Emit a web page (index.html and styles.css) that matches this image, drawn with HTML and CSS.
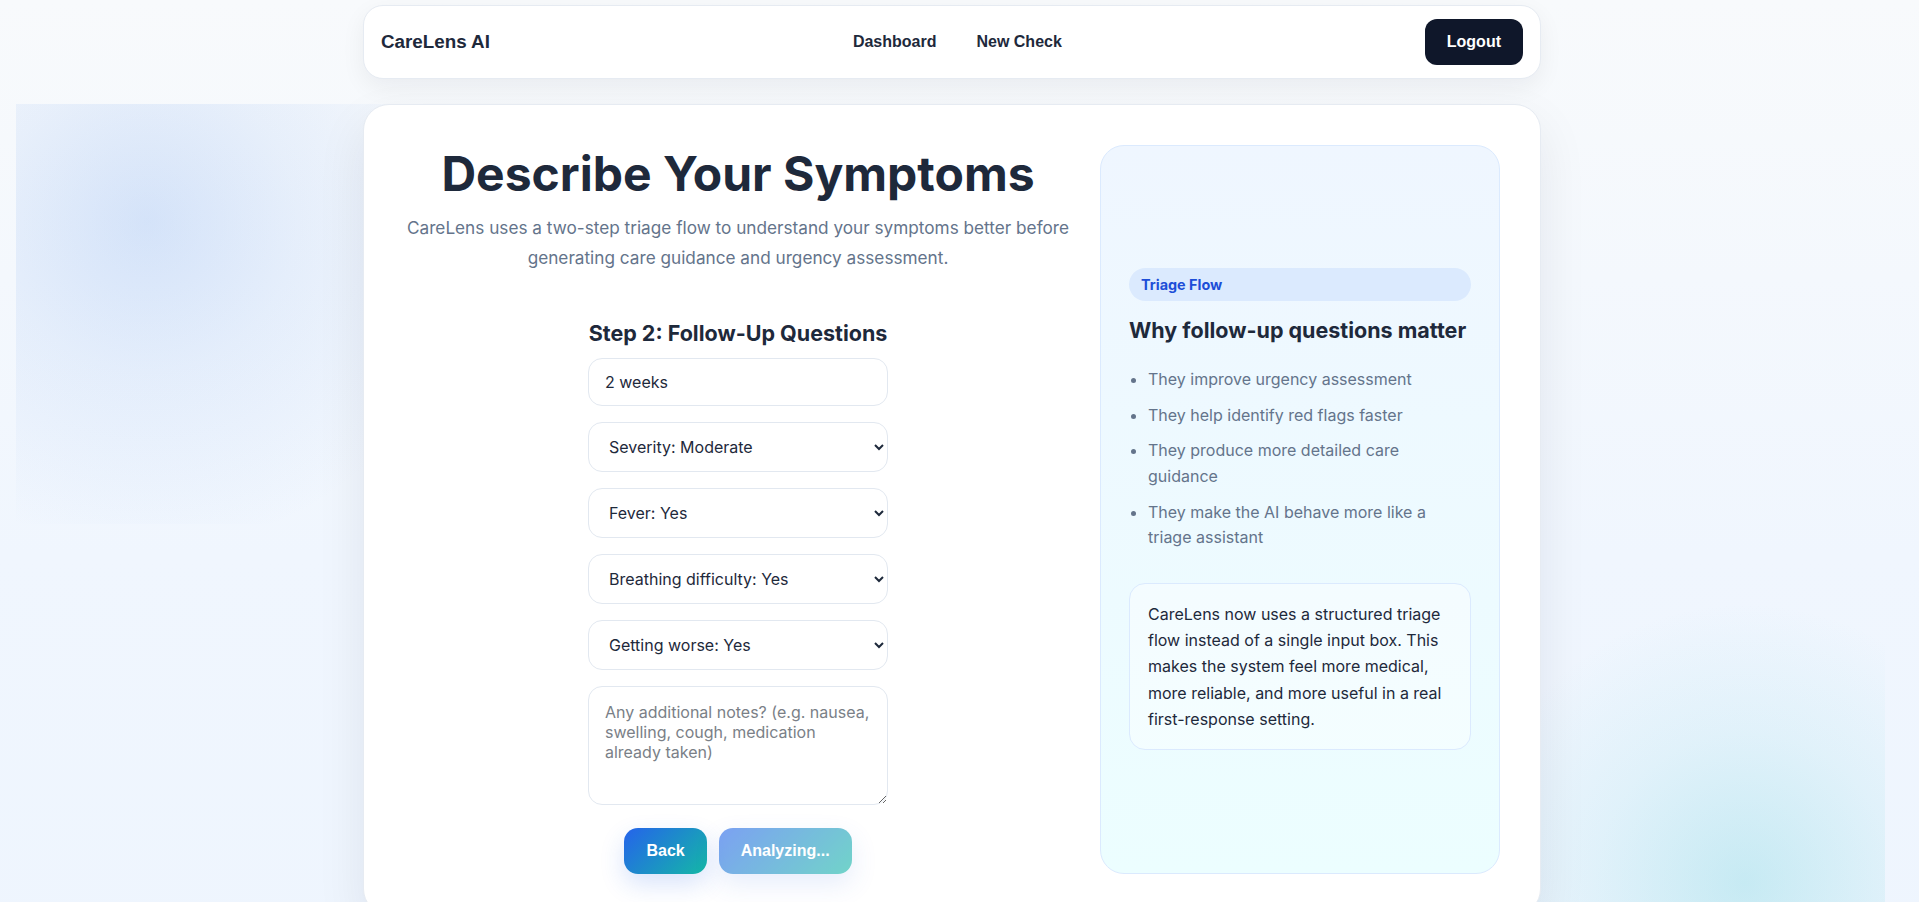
FILE: index.html
```html
<!DOCTYPE html>
<html lang="en">
<head>
<meta charset="utf-8">
<title>CareLens AI – Describe Your Symptoms</title>
<link rel="stylesheet" href="styles.css">
</head>
<body>
<div class="page">
  <header class="topbar">
    <div class="brand">CareLens AI</div>
    <nav class="nav">
      <a href="#" class="nav-link">Dashboard</a>
      <a href="#" class="nav-link">New Check</a>
    </nav>
    <button class="logout" type="button">Logout</button>
  </header>

  <main class="card">
    <section class="intake">
      <h1 class="title">Describe Your Symptoms</h1>
      <p class="lead">CareLens uses a two-step triage flow to understand your symptoms better before generating care guidance and urgency assessment.</p>

      <form class="form">
        <h2 class="step-title">Step 2: Follow-Up Questions</h2>
        <input class="field field-input" type="text" value="2 weeks">
        <select class="field field-select">
          <option>Severity: Moderate</option>
        </select>
        <select class="field field-select">
          <option>Fever: Yes</option>
        </select>
        <select class="field field-select">
          <option>Breathing difficulty: Yes</option>
        </select>
        <select class="field field-select">
          <option>Getting worse: Yes</option>
        </select>
        <textarea class="field field-area" placeholder="Any additional notes? (e.g. nausea, swelling, cough, medication already taken)"></textarea>
        <div class="actions">
          <button type="button" class="btn">Back</button>
          <button type="button" class="btn btn-busy" disabled>Analyzing...</button>
        </div>
      </form>
    </section>

    <aside class="panel">
      <span class="pill">Triage Flow</span>
      <h3 class="panel-title">Why follow-up questions matter</h3>
      <ul class="reasons">
        <li>They improve urgency assessment</li>
        <li>They help identify red flags faster</li>
        <li>They produce more detailed care guidance</li>
        <li>They make the AI behave more like a triage assistant</li>
      </ul>
      <div class="note">CareLens now uses a structured triage flow instead of a single input box. This makes the system feel more medical, more reliable, and more useful in a real first-response setting.</div>
    </aside>
  </main>
</div>
</body>
</html>
```

FILE: styles.css
```css
* { box-sizing: border-box; }

html, body { margin: 0; }

body {
  font-family: Inter, "Noto Sans", sans-serif;
  color: #1e293b;
  min-height: 100vh;
  background-color: #f6f9fd;
  background-image:
    radial-gradient(circle at 131px 118px, rgba(96, 150, 235, 0.22) 0, rgba(96, 150, 235, 0.10) 150px, rgba(96, 150, 235, 0) 330px),
    radial-gradient(circle at 260px 323px, rgba(94, 205, 215, 0.28) 0, rgba(94, 205, 215, 0.10) 150px, rgba(94, 205, 215, 0) 280px),
    linear-gradient(180deg, #f8fafc 0%, #f0f6fe 55%, #eef5fe 100%);
  background-repeat: no-repeat;
  background-position: 16px 104px, 1485px 560px, 0 0;
  background-size: 520px 420px, 400px 500px, 100% 100%;
}

.page {
  padding: 5px 15px 94px 0;
}

.topbar {
  width: 1178px;
  margin: 0 auto;
  height: 74px;
  display: flex;
  align-items: center;
  justify-content: space-between;
  padding: 0 17px;
  background: #ffffff;
  border: 1px solid #e6ebf2;
  border-radius: 20px;
  box-shadow: 0 8px 24px rgba(15, 23, 42, 0.06);
  font-family: "Liberation Sans", Arial, sans-serif;
}

.brand {
  font-size: 18.8px;
  font-weight: 700;
  color: #1e293b;
}

.nav {
  display: flex;
  gap: 40px;
}

.nav-link {
  font-size: 16px;
  font-weight: 700;
  color: #1e293b;
  text-decoration: none;
}

.logout {
  font-family: "Liberation Sans", Arial, sans-serif;
  font-size: 16px;
  font-weight: 700;
  color: #ffffff;
  background: #0f172a;
  border: 0;
  border-radius: 12px;
  height: 46px;
  padding: 0 22px;
}

.card {
  width: 1178px;
  margin: 25px auto 0;
  background: #ffffff;
  border: 1px solid #e6ebf2;
  border-radius: 26px;
  box-shadow: 0 20px 50px rgba(15, 23, 42, 0.08);
  padding: 40px;
  display: grid;
  grid-template-columns: 1fr 400px;
  gap: 28px;
}

.intake {
  text-align: center;
}

.title {
  margin: 0 0 10px;
  font-size: 48px;
  line-height: 1.2;
  font-weight: 700;
  color: #1e293b;
}

.lead {
  margin: 0;
  font-size: 17.2px;
  line-height: 30px;
  color: #64748b;
}

.form {
  width: 300px;
  margin: 46px auto 0;
  display: flex;
  flex-direction: column;
}

.step-title {
  margin: 0 0 11px;
  font-size: 21.5px;
  line-height: 28px;
  font-weight: 700;
  color: #1e293b;
  white-space: nowrap;
}

.field {
  width: 100%;
  font-family: Inter, "Noto Sans", sans-serif;
  font-size: 16px;
  color: #1e293b;
  background: #ffffff;
  border: 1px solid #e2e8f0;
  border-radius: 14px;
  margin: 0 0 16px;
  outline: none;
}

.field-input {
  height: 48px;
  padding: 0 16px;
}

.field-select {
  height: 50px;
  padding: 0 16px;
}

.field-area {
  height: 119px;
  padding: 15px 16px;
  line-height: 20px;
  margin-bottom: 0;
  resize: vertical;
}

.field-area::placeholder {
  color: #7a7f87;
}

.actions {
  margin-top: 23px;
  display: flex;
  justify-content: center;
  gap: 12px;
}

.btn {
  font-family: "Liberation Sans", Arial, sans-serif;
  font-size: 16px;
  font-weight: 700;
  color: #ffffff;
  height: 46px;
  padding: 0 22px;
  border: 0;
  border-radius: 14px;
  background: linear-gradient(135deg, #2563eb 0%, #14b8a6 100%);
  box-shadow: 0 10px 24px rgba(37, 99, 235, 0.18);
}

.btn-busy {
  opacity: 0.6;
}

.panel {
  display: flex;
  flex-direction: column;
  justify-content: center;
  padding: 28px;
  border: 1px solid #dbeafe;
  border-radius: 24px;
  background: linear-gradient(180deg, #eff6ff 0%, #ecfeff 100%);
}

.pill {
  display: block;
  padding: 8px 12px;
  font-size: 14.4px;
  line-height: 17px;
  font-weight: 700;
  color: #1d4ed8;
  background: #dbeafe;
  border-radius: 999px;
}

.panel-title {
  margin: 15px 0 0;
  font-size: 21.5px;
  line-height: 28px;
  font-weight: 700;
  color: #1e293b;
}

.reasons {
  margin: 23px 0 22px;
  padding: 0 20px 0 19px;
  color: #64748b;
  font-size: 16px;
  line-height: 1.6;
}

.reasons li {
  margin-bottom: 10px;
}

.note {
  padding: 17px 18px;
  border: 1px solid #dbeafe;
  border-radius: 16px;
  background: rgba(255, 255, 255, 0.4);
  font-size: 16px;
  line-height: 26.3px;
  color: #1e293b;
}
```
